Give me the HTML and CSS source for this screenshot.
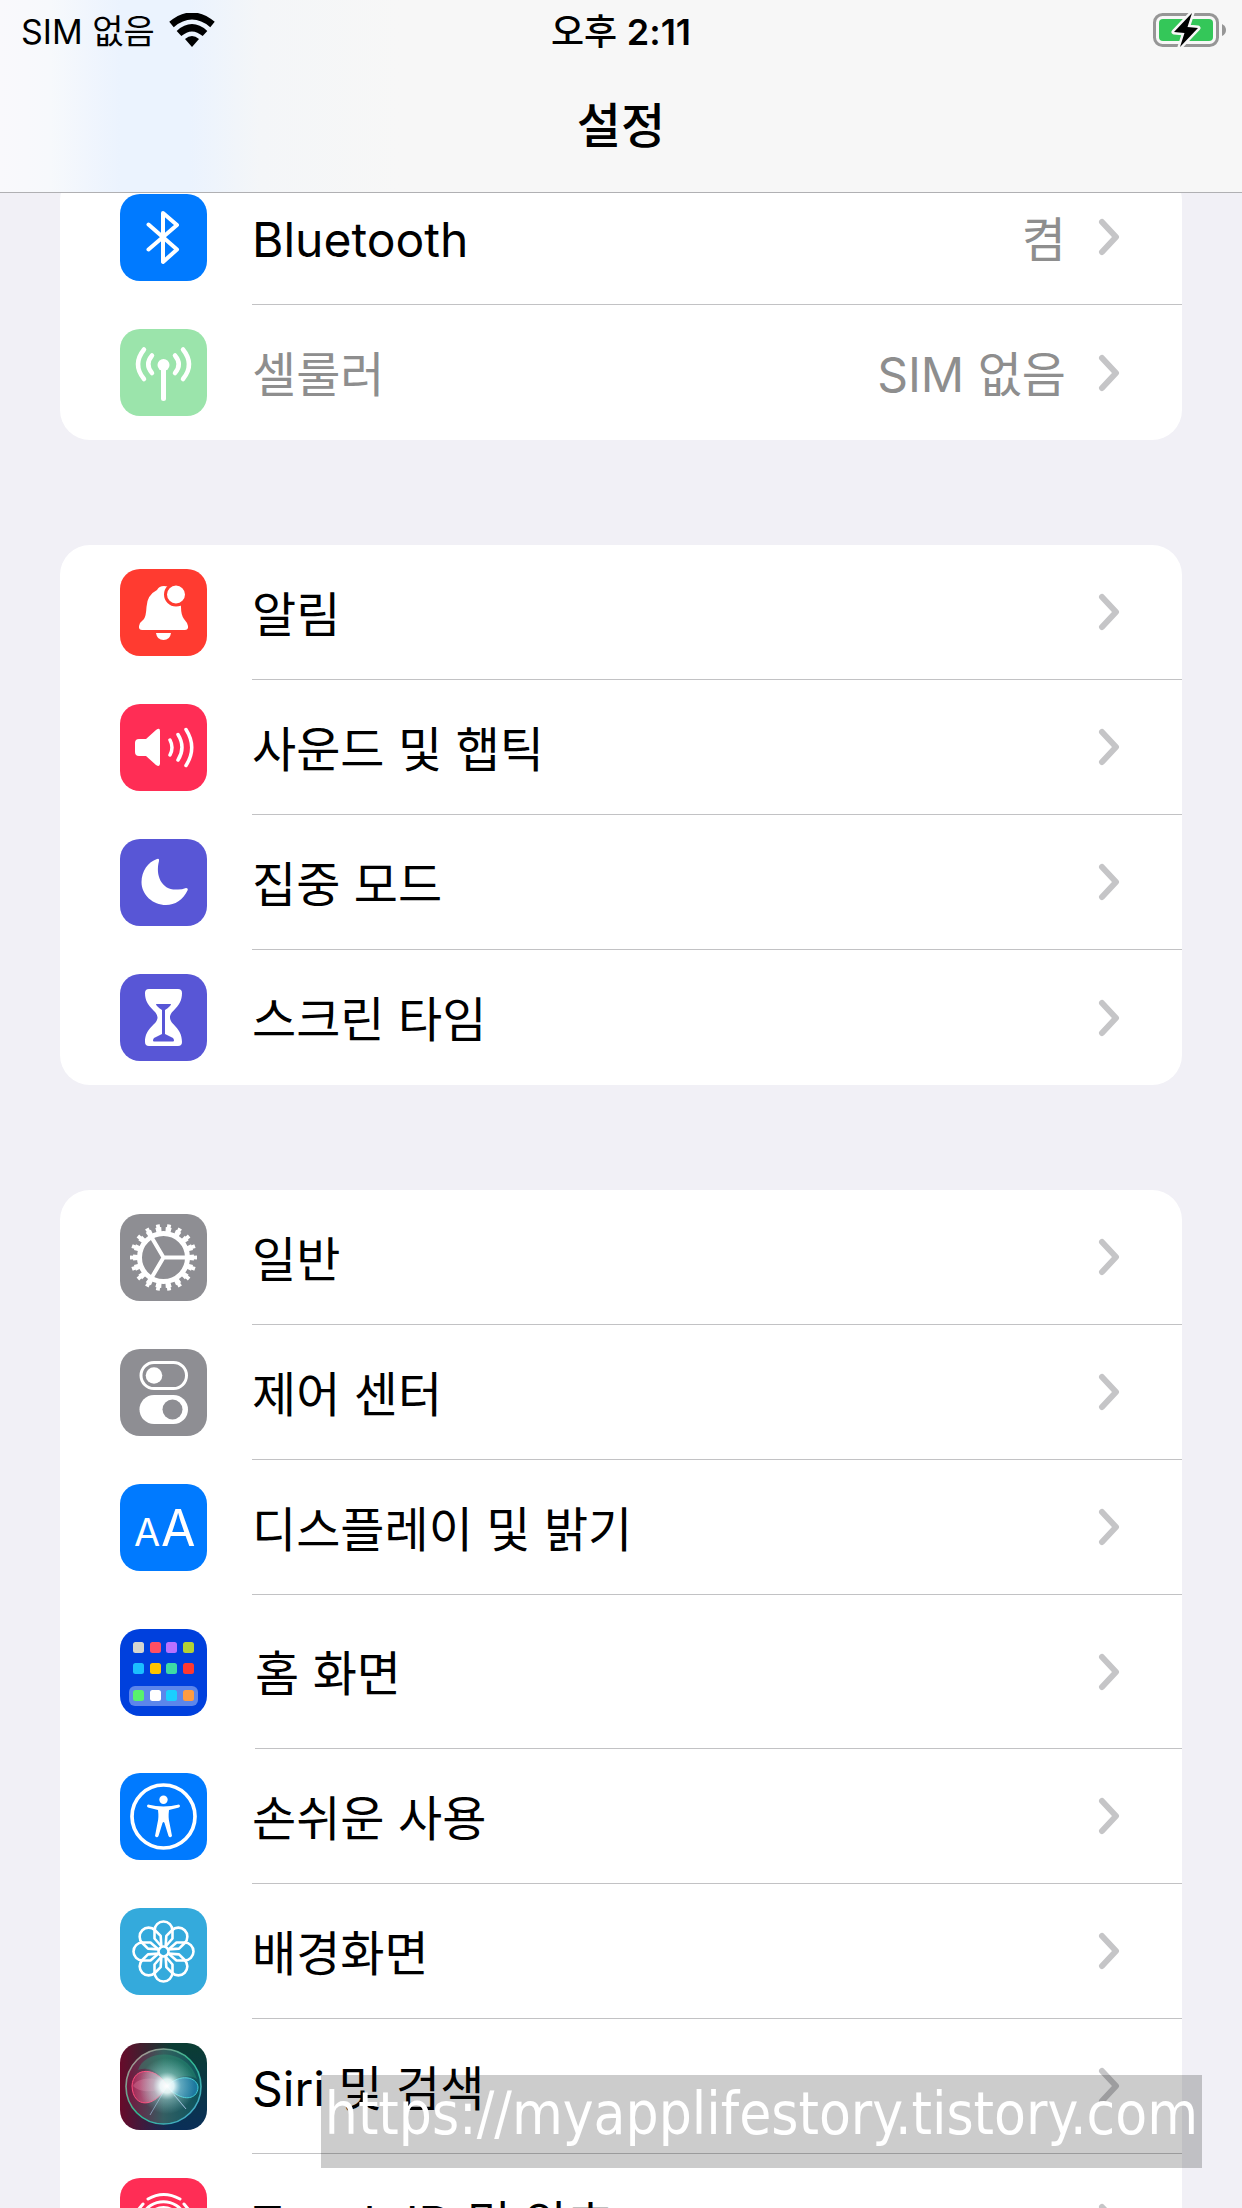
FILE: index.html
```html
<!DOCTYPE html>
<html lang="ko">

<head>
  <meta charset="UTF-8">
  <meta name="viewport" content="width=device-width, initial-scale=1.0">
  <title>설정</title>
  <link rel="stylesheet" href="styles.css">
</head>

<body>
  <svg class="defs" aria-hidden="true">
    <symbol id="chevron" viewBox="0 0 22 38">
      <path d="M4 4 L18 19 L4 34" fill="none" stroke="#c5c5c7" stroke-width="6" stroke-linecap="round" stroke-linejoin="round" />
    </symbol>
    <symbol id="petal" viewBox="-44 -44 88 88">
      <path d="M-2 -5 L-9 -13 V-21 A9 9 0 0 1 9 -21 V-13 L2 -5" />
    </symbol>
  </svg>

  <header class="header">
    <div class="status">
      <div class="carrier">
        <span class="sim">SIM 없음</span>
        <svg class="wifi" viewBox="0 0 46 34">
          <path d="M23 34 L16 26 Q23 20 30 26 Z" />
          <path d="M10 20.500 Q23 9 36 20.500" fill="none" stroke="#000" stroke-width="7" />
          <path d="M2.500 11.500 Q23 -5.500 43.500 11.500" fill="none" stroke="#000" stroke-width="7" />
        </svg>
      </div>
      <div class="time">오후 <b>2:11</b></div>
      <svg class="battery" viewBox="0 0 74 38">
        <rect x="1.500" y="3.500" width="63" height="31" rx="8" fill="none" stroke="#969696" stroke-width="3" />
        <rect x="6" y="8" width="54" height="22" rx="4" fill="#34c759" />
        <path d="M69 13 Q73 15 73 19 Q73 23 69 25 Z" fill="#969696" />
        <path d="M39 2 L21 21 L31.500 22 L27 36 L45 17 L34.500 16 Z" fill="#000" stroke="#f7f7f7" stroke-width="5" stroke-linejoin="round" paint-order="stroke" />
      </svg>
    </div>
    <h1 class="title">설정</h1>
  </header>

  <main class="settings">
    <ul class="group">
      <li><a class="row" href="#">
        <svg class="icon blue" viewBox="0 0 87 87">
          <path class="line" stroke-width="4" d="M28.500 30.500 L57 55.500 L43 68 V19 L57 31 L28.500 55.500" />
        </svg>
        <span class="body"><span class="label">Bluetooth</span><span class="value">켬</span><svg class="chevron"><use href="#chevron" /></svg></span>
      </a></li>
      <li><a class="row disabled" href="#">
        <svg class="icon green" viewBox="0 0 87 87">
          <circle class="fill" cx="43.500" cy="36" r="6" />
          <path class="line" stroke-width="5" d="M43.500 36 V69.500" />
          <path class="line" stroke-width="4.500" d="M32 26.500 Q24.500 35.500 32 44 M55 26.500 Q62.500 35.500 55 44 M24 20.500 Q12 35.500 24 50 M63 20.500 Q75 35.500 63 50" />
        </svg>
        <span class="body"><span class="label">셀룰러</span><span class="value">SIM 없음</span><svg class="chevron"><use href="#chevron" /></svg></span>
      </a></li>
    </ul>

    <ul class="group">
      <li><a class="row" href="#">
        <svg class="icon red" viewBox="0 0 87 87">
          <path class="fill" d="M37 21 Q39 17 44 17 Q52 17 54 23 Q61 28 61 38 Q61 46 64 50 L67 54 Q70 61 65 61 H22 Q17 61 20 54 L24 50 Q26 47 26.500 38 Q27 26 37 21 Z" />
          <path class="fill" d="M36 64 H51 Q50 71 43.500 71 Q37 71 36 64 Z" />
          <circle class="fill" cx="56" cy="25.500" r="10.500" stroke="#ff3b30" stroke-width="3" />
        </svg>
        <span class="body"><span class="label">알림</span><svg class="chevron"><use href="#chevron" /></svg></span>
      </a></li>
      <li><a class="row" href="#">
        <svg class="icon pink" viewBox="0 0 87 87">
          <path class="fill" d="M19 35 H26 L36 26 Q40 23 40 27 V59.500 Q40 63.500 36 61 L26 52 H19 Q15 52 15 48 V39 Q15 35 19 35 Z" />
          <path class="line" stroke-width="3.500" d="M50 36 Q54 43.500 50 51 M58 30.500 Q66 43.500 58 56 M66 25.500 Q77.500 43.500 66 61.500" />
        </svg>
        <span class="body"><span class="label">사운드 및 햅틱</span><svg class="chevron"><use href="#chevron" /></svg></span>
      </a></li>
      <li><a class="row" href="#">
        <svg class="icon purple" viewBox="0 0 87 87">
          <path class="fill" d="M37 20 Q39.500 19 39 22 C35 37 42 52 58 50.500 Q62 50.500 66 49 Q68.500 49 67.500 51.500 C63 61 55 66 46 66 C33 66 21.500 56 21.500 43 C21.500 32 28 23 37 20 Z" />
        </svg>
        <span class="body"><span class="label">집중 모드</span><svg class="chevron"><use href="#chevron" /></svg></span>
      </a></li>
      <li><a class="row" href="#">
        <svg class="icon purple" viewBox="0 0 87 87">
          <path class="fill" d="M29 15 H58 Q62 15 62 19 C62 34 50 36 50 43.500 C50 51 62 53 62 68 Q62 72 58 72 H29 Q25 72 25 68 C25 53 37.500 51 37.500 43.500 C37.500 36 25 34 25 19 Q25 15 29 15 Z" />
          <path d="M36 30 H51 Q51 32 45 36 V60 L53 64 Q55 67 53 67.500 H34 Q32 67 34 64 L42 60 V36 Q36 32 36 30 Z" fill="#5856d6" />
        </svg>
        <span class="body"><span class="label">스크린 타임</span><svg class="chevron"><use href="#chevron" /></svg></span>
      </a></li>
    </ul>

    <ul class="group">
      <li><a class="row" href="#">
        <svg class="icon gray" viewBox="0 0 87 87">
          <circle class="line" cx="43.500" cy="43.500" r="24" stroke-width="5" />
          <circle class="teeth" cx="43.500" cy="43.500" r="28" stroke-width="5" pathLength="180" stroke-dasharray="5.600 4.400" stroke-dashoffset="2.800" />
          <circle class="teeth" cx="43.500" cy="43.500" r="31.500" stroke-width="4" pathLength="180" stroke-dasharray="3.400 6.600" stroke-dashoffset="1.700" />
          <path class="line" stroke-width="4" d="M66 43.500 H43.500 L32 24 M43.500 43.500 L32 63" />
        </svg>
        <span class="body"><span class="label">일반</span><svg class="chevron"><use href="#chevron" /></svg></span>
      </a></li>
      <li><a class="row" href="#">
        <svg class="icon gray" viewBox="0 0 87 87">
          <rect class="line" x="21" y="13.500" width="45.500" height="26" rx="13" stroke-width="3" />
          <circle class="fill" cx="34" cy="26.500" r="8.300" />
          <rect class="fill" x="19.500" y="46" width="48.500" height="29" rx="14.500" />
          <circle cx="52.500" cy="60.500" r="10" fill="#8e8e93" />
        </svg>
        <span class="body"><span class="label">제어 센터</span><svg class="chevron"><use href="#chevron" /></svg></span>
      </a></li>
      <li><a class="row" href="#">
        <svg class="icon blue" viewBox="0 0 87 87">
          <text class="letter" x="14" y="62" font-size="38">A</text>
          <text class="letter" x="41" y="62" font-size="50">A</text>
        </svg>
        <span class="body"><span class="label">디스플레이 및 밝기</span><svg class="chevron"><use href="#chevron" /></svg></span>
      </a></li>
      <li><a class="row tall" href="#">
        <svg class="icon navy" viewBox="0 0 87 87">
          <rect x="9" y="57" width="69" height="20" rx="6" fill="#5c86eb" />
          <g>
            <rect x="13" y="13" width="11" height="11" rx="2.500" fill="#d6d6cf" />
            <rect x="30" y="13" width="11" height="11" rx="2.500" fill="#ff4f64" />
            <rect x="46" y="13" width="11" height="11" rx="2.500" fill="#b871ff" />
            <rect x="63" y="13" width="11" height="11" rx="2.500" fill="#b2d235" />
            <rect x="13" y="34" width="11" height="11" rx="2.500" fill="#1abfff" />
            <rect x="30" y="34" width="11" height="11" rx="2.500" fill="#ffc400" />
            <rect x="46" y="34" width="11" height="11" rx="2.500" fill="#3ddba5" />
            <rect x="63" y="34" width="11" height="11" rx="2.500" fill="#ff3830" />
            <rect x="13" y="61" width="11" height="11" rx="2.500" fill="#58f26c" />
            <rect x="30" y="61" width="11" height="11" rx="2.500" fill="#fff" />
            <rect x="46" y="61" width="11" height="11" rx="2.500" fill="#1acfff" />
            <rect x="63" y="61" width="11" height="11" rx="2.500" fill="#ff9c40" />
          </g>
        </svg>
        <span class="body"><span class="label">홈 화면</span><svg class="chevron"><use href="#chevron" /></svg></span>
      </a></li>
      <li><a class="row" href="#">
        <svg class="icon blue" viewBox="0 0 87 87">
          <circle class="line" cx="43.500" cy="43.500" r="31.500" stroke-width="3.700" />
          <circle class="fill" cx="43.500" cy="26.700" r="4.200" />
          <path class="fill" d="M28 31.500 Q43.500 35.500 59 31.500 Q61 33 59 34.500 L49 37 Q48 45 49.500 50 L52 63 Q50 65.500 48.500 63 L44.500 50 Q43.500 48 42.500 50 L38.500 63 Q37 65.500 35 63 L37.500 50 Q39 45 38 37 L28 34.500 Q26 33 28 31.500 Z" />
        </svg>
        <span class="body"><span class="label">손쉬운 사용</span><svg class="chevron"><use href="#chevron" /></svg></span>
      </a></li>
      <li><a class="row" href="#">
        <svg class="icon sky" viewBox="0 0 87 87">
          <g class="line" stroke-width="2.600" transform="translate(43.500 43.500)">
            <circle r="5" />
            <use href="#petal" x="-44" y="-44" width="88" height="88" />
            <use href="#petal" x="-44" y="-44" width="88" height="88" transform="rotate(45)" />
            <use href="#petal" x="-44" y="-44" width="88" height="88" transform="rotate(90)" />
            <use href="#petal" x="-44" y="-44" width="88" height="88" transform="rotate(135)" />
            <use href="#petal" x="-44" y="-44" width="88" height="88" transform="rotate(180)" />
            <use href="#petal" x="-44" y="-44" width="88" height="88" transform="rotate(225)" />
            <use href="#petal" x="-44" y="-44" width="88" height="88" transform="rotate(270)" />
            <use href="#petal" x="-44" y="-44" width="88" height="88" transform="rotate(315)" />
          </g>
        </svg>
        <span class="body"><span class="label">배경화면</span><svg class="chevron"><use href="#chevron" /></svg></span>
      </a></li>
      <li><a class="row" href="#">
        <svg class="icon siri" viewBox="0 0 87 87">
          <defs>
            <linearGradient id="ring" x1="0" y1="0" x2="1" y2="1">
              <stop offset="0" stop-color="#c98a92" />
              <stop offset="0.500" stop-color="#2fb98f" />
              <stop offset="1" stop-color="#4aa5d8" />
            </linearGradient>
            <linearGradient id="orb" x1="0" y1="0.500" x2="1" y2="0.500">
              <stop offset="0" stop-color="#7d1440" />
              <stop offset="0.500" stop-color="#3b6b68" />
              <stop offset="1" stop-color="#0b5a60" />
            </linearGradient>
            <linearGradient id="pinkLobe" x1="0" y1="0" x2="1" y2="0">
              <stop offset="0" stop-color="#b52a5c" />
              <stop offset="1" stop-color="#ffc9dc" />
            </linearGradient>
            <radialGradient id="glow">
              <stop offset="0" stop-color="#fff" />
              <stop offset="0.250" stop-color="#f0ffff" stop-opacity="0.900" />
              <stop offset="0.500" stop-color="#bdeeee" stop-opacity="0.400" />
              <stop offset="1" stop-color="#9fe5e5" stop-opacity="0" />
            </radialGradient>
          </defs>
          <circle cx="43.500" cy="43.500" r="37.500" fill="url(#orb)" fill-opacity="0.800" stroke="url(#ring)" stroke-width="1.600" />
          <path d="M18 27 C25 5 68 5 77 36 C65 29 53 35 47 43 C40 28 29 23 18 27 Z" fill="#2b9a77" fill-opacity="0.400" />
          <path d="M47 43 C37 24 13 23 12 43 C13 66 35 65 47 43 Z" fill="url(#pinkLobe)" fill-opacity="0.700" stroke="#ff4d7d" />
          <path d="M47 43 C38 32 17 34 13 43 C20 50 36 50 47 43 Z" fill="#f08fb0" fill-opacity="0.300" />
          <path d="M47 43 C60 30 77 34 78 44 C78 57 61 60 47 43 Z" fill="#2690cc" fill-opacity="0.600" stroke="#3fcbd5" />
          <path d="M47 43 L66 66 L54 52 M47 43 L30 72" fill="none" stroke="#9ab6d6" stroke-opacity="0.700" />
          <circle cx="47" cy="43" r="28" fill="url(#glow)" />
        </svg>
        <span class="body"><span class="label">Siri 및 검색</span><svg class="chevron"><use href="#chevron" /></svg></span>
      </a></li>
      <li><a class="row" href="#">
        <svg class="icon pink" viewBox="0 0 87 87">
          <path class="line" stroke-width="3" d="M28 21 Q43.500 12 60 21 M18 32 L23 26 M64 26 L69 32 M22 38 C30 19 57 19 65 38 M28 43 C30 25 57 25 59 43 V56 M35 45 C36 33 51 33 52 45 V62 M43.500 44 V66 M35 52 V64 M28 50 V60" />
        </svg>
        <span class="body"><span class="label">Touch ID 및 암호</span><svg class="chevron"><use href="#chevron" /></svg></span>
      </a></li>
    </ul>
  </main>

  <div class="watermark">https://myapplifestory.tistory.com</div>
</body>

</html>
```

FILE: styles.css
```css
* {
  box-sizing: border-box;
}

body {
  margin: 0;
  height: 100vh;
  overflow: hidden;
  background: #f1f0f6;
  color: #000;
  font-family: Inter, 'Noto Sans CJK KR', sans-serif;
}

.defs {
  display: none;
}

/* header */
.header {
  position: relative;
  z-index: 1;
  height: 193px;
  background: linear-gradient(90deg, #f9f9fc 0, #f7f9fc 50px, #ebf3fe 120px, #ebf3fe 190px, #f4f6f8 260px, #f7f7f7 400px);
  border-bottom: 1px solid #b0b0b3;
}

.status {
  display: grid;
  grid-template-columns: 1fr auto 1fr;
  align-items: center;
  height: 60px;
  padding: 0 15px;
  font-size: 34px;
  line-height: 40px;
}

.carrier {
  display: flex;
  align-items: center;
  gap: 14px;
  padding-left: 6px;
}

.sim,
.time {
  padding-top: 3px;
}

.wifi {
  width: 46px;
  height: 34px;
}

.time {
  font-size: 36px;
  font-weight: 500;
}

.time b {
  font-weight: 600;
}

.battery {
  justify-self: end;
  width: 74px;
  height: 38px;
}

.title {
  margin: 0;
  font-size: 48px;
  font-weight: 500;
  line-height: 132px;
  text-align: center;
}

/* list */
.settings {
  display: flex;
  flex-direction: column;
  gap: 105px;
  margin-top: -23px;
  padding: 0 60px;
}

.group {
  margin: 0;
  padding: 0;
  list-style: none;
  background: #fff;
  border-radius: 30px;
  overflow: hidden;
}

.row {
  display: flex;
  align-items: center;
  gap: 45px;
  height: 135px;
  padding-left: 60px;
  color: inherit;
  font-size: 48px;
  line-height: 60px;
  text-decoration: none;
}

.tall {
  gap: 48px;
  height: 154px;
}

.disabled {
  color: #8e8e8e;
}

.icon {
  flex: none;
  width: 87px;
  height: 87px;
  border-radius: 20px;
}

.body {
  display: flex;
  flex: 1;
  align-items: center;
  height: 100%;
  padding-right: 62px;
  border-bottom: 1px solid #c2c2c4;
}

li:last-child .body {
  border-bottom: 0;
}

.label,
.value {
  padding-top: 5px;
}

.label {
  flex: 1;
}

.value {
  margin-right: 32px;
  color: #8e8e8e;
}

.chevron {
  width: 22px;
  height: 38px;
}

/* icons */
.fill {
  fill: #fff;
}

.line,
.teeth {
  fill: none;
  stroke: #fff;
}

.line {
  stroke-linecap: round;
  stroke-linejoin: round;
}

.letter {
  fill: #fff;
  font-family: Inter, sans-serif;
}

.blue {
  background: #007aff;
}

.green {
  background: #9be4ab;
}

.red {
  background: #ff3b30;
}

.pink {
  background: #ff2d55;
}

.purple {
  background: #5856d6;
}

.gray {
  background: #8e8e93;
}

.navy {
  background: #0040dd;
}

.sky {
  background: #34aadc;
}

.siri {
  background: linear-gradient(90deg, #680a2a, transparent 60%), linear-gradient(#0b3d33, #0a2f58);
}

.watermark {
  position: fixed;
  right: 40px;
  bottom: 40px;
  z-index: 2;
  padding: 0 4px 14px;
  background: rgba(0, 0, 0, 0.2);
  color: #fff;
  font-family: 'DejaVu Sans Condensed', 'Noto Sans', sans-serif;
  font-size: 58px;
  line-height: 79px;
}
```
